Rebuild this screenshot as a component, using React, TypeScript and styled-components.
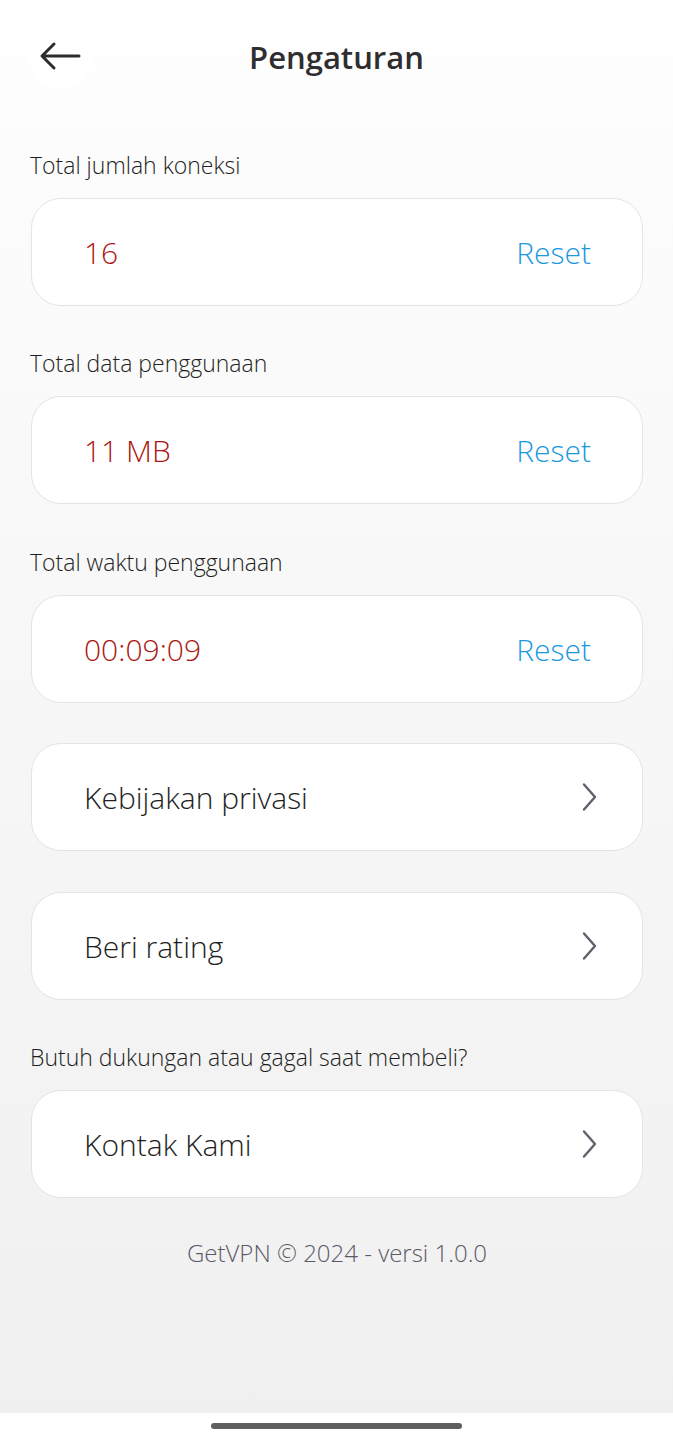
import styled, { createGlobalStyle } from "styled-components";

const GlobalStyle = createGlobalStyle`
  html, body {
    margin: 0;
    padding: 0;
  }
  body {
    font-family: "Open Sans", "Noto Sans", sans-serif;
    background: #ffffff;
  }
`;

const RED = "#ab1612";
const BLUE = "#1b98de";
const TEXT = "#1e1e22";

const Screen = styled.div`
  width: 673px;
  height: 1440px;
  display: flex;
  flex-direction: column;
  background: linear-gradient(180deg, #ffffff 0px, #fcfcfc 160px, #f0f0f0 1412px);
`;

const Header = styled.header`
  height: 114px;
  display: grid;
  grid-template-columns: 120px 1fr 120px;
  align-items: center;
`;

const BackButton = styled.button`
  width: 64px;
  height: 64px;
  margin-left: 28px;
  margin-top: -2px;
  border: none;
  border-radius: 50%;
  background: #ffffff;
  display: flex;
  align-items: center;
  justify-content: center;
  padding: 0;
`;

const Title = styled.h1`
  margin: 0;
  text-align: center;
  font-size: 31px;
  font-weight: 600;
  color: #2e2e30;
  margin-top: -1px;
`;

const Content = styled.main`
  flex: 1;
  padding: 36px 30px 0 31px;
  display: flex;
  flex-direction: column;
`;

const Label = styled.div`
  font-size: 23px;
  line-height: 30px;
  font-weight: 300;
  color: ${TEXT};
  margin-bottom: 18px;
  margin-left: -1px;
`;

const Group = styled.section<{ $gap?: number }>`
  display: flex;
  flex-direction: column;
  margin-bottom: ${(p) => p.$gap ?? 42}px;
`;

const Card = styled.div<{ $link?: boolean }>`
  height: 108px;
  box-sizing: border-box;
  background: #ffffff;
  border: 1px solid #e4e4e4;
  border-radius: 30px;
  display: flex;
  align-items: center;
  justify-content: space-between;
  padding: 0 ${(p) => (p.$link ? 43 : 51)}px 0 52px;
  font-size: 30px;
  font-weight: 300;
`;

const Value = styled.span`
  color: ${RED};
`;

const ResetButton = styled.button`
  border: none;
  background: none;
  padding: 0;
  font-family: inherit;
  font-size: 30px;
  font-weight: 300;
  color: ${BLUE};
`;

const LinkText = styled.span`
  color: ${TEXT};
`;

const Footer = styled.div`
  text-align: center;
  font-size: 24px;
  font-weight: 300;
  color: #5a5a66;
  margin-top: 38px;
`;

const NavBar = styled.div`
  height: 27px;
  background: #ffffff;
  display: flex;
  justify-content: center;
  padding-top: 10px;
  box-sizing: border-box;
`;

const HomeIndicator = styled.div`
  width: 251px;
  height: 6px;
  border-radius: 3px;
  background: #5e5e5e;
`;

const ArrowLeft = () => (
  <svg width="44" height="32" viewBox="0 0 44 32" fill="none">
    <path
      d="M41 16H5M16 4L4 16L16 28"
      stroke="#2c2c2e"
      strokeWidth="3"
      strokeLinecap="round"
      strokeLinejoin="round"
    />
  </svg>
);

const Chevron = () => (
  <svg width="18" height="30" viewBox="0 0 18 30" fill="none">
    <path
      d="M3 2.5L14 15L3 27.5"
      stroke="#5f606c"
      strokeWidth="2.4"
      strokeLinecap="round"
      strokeLinejoin="round"
    />
  </svg>
);

const stats = [
  { label: "Total jumlah koneksi", value: "16", gap: 42 },
  { label: "Total data penggunaan", value: "11 MB", gap: 43 },
  { label: "Total waktu penggunaan", value: "00:09:09", gap: 40 },
];

const App = () => {
  return (
    <Screen>
      <GlobalStyle />
      <Header>
        <BackButton aria-label="Kembali">
          <ArrowLeft />
        </BackButton>
        <Title>Pengaturan</Title>
        <div />
      </Header>
      <Content>
        {stats.map((s) => (
          <Group key={s.label} $gap={s.gap}>
            <Label>{s.label}</Label>
            <Card>
              <Value>{s.value}</Value>
              <ResetButton>Reset</ResetButton>
            </Card>
          </Group>
        ))}
        <Group $gap={41}>
          <Card $link>
            <LinkText>Kebijakan privasi</LinkText>
            <Chevron />
          </Card>
        </Group>
        <Group>
          <Card $link>
            <LinkText>Beri rating</LinkText>
            <Chevron />
          </Card>
        </Group>
        <Group $gap={0}>
          <Label>Butuh dukungan atau gagal saat membeli?</Label>
          <Card $link>
            <LinkText>Kontak Kami</LinkText>
            <Chevron />
          </Card>
        </Group>
        <Footer>GetVPN © 2024 - versi 1.0.0</Footer>
      </Content>
      <NavBar>
        <HomeIndicator />
      </NavBar>
    </Screen>
  );
};

export default App;
